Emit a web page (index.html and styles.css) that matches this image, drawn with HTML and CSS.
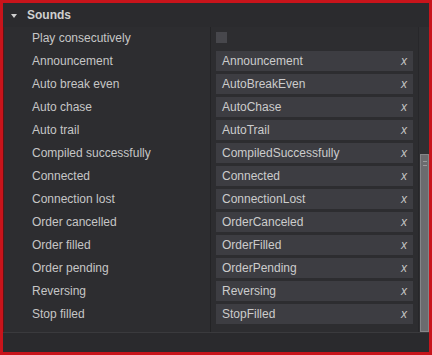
FILE: index.html
```html
<!DOCTYPE html>
<html>
<head>
<meta charset="utf-8">
<link rel="stylesheet" href="styles.css">
</head>
<body>
<div class="frame">
  <div class="header"><span class="tri"></span><span class="title">Sounds</span></div>
  <div class="scrollarea">
    <div class="rows">
      <div class="row"><div class="label">Play consecutively</div><div class="value"><span class="check"></span></div></div>
      <div class="row"><div class="label">Announcement</div><div class="value"><div class="input"><span>Announcement</span><i>x</i></div></div></div>
      <div class="row"><div class="label">Auto break even</div><div class="value"><div class="input"><span>AutoBreakEven</span><i>x</i></div></div></div>
      <div class="row"><div class="label">Auto chase</div><div class="value"><div class="input"><span>AutoChase</span><i>x</i></div></div></div>
      <div class="row"><div class="label">Auto trail</div><div class="value"><div class="input"><span>AutoTrail</span><i>x</i></div></div></div>
      <div class="row"><div class="label">Compiled successfully</div><div class="value"><div class="input"><span>CompiledSuccessfully</span><i>x</i></div></div></div>
      <div class="row"><div class="label">Connected</div><div class="value"><div class="input"><span>Connected</span><i>x</i></div></div></div>
      <div class="row"><div class="label">Connection lost</div><div class="value"><div class="input"><span>ConnectionLost</span><i>x</i></div></div></div>
      <div class="row"><div class="label">Order cancelled</div><div class="value"><div class="input"><span>OrderCanceled</span><i>x</i></div></div></div>
      <div class="row"><div class="label">Order filled</div><div class="value"><div class="input"><span>OrderFilled</span><i>x</i></div></div></div>
      <div class="row"><div class="label">Order pending</div><div class="value"><div class="input"><span>OrderPending</span><i>x</i></div></div></div>
      <div class="row"><div class="label">Reversing</div><div class="value"><div class="input"><span>Reversing</span><i>x</i></div></div></div>
      <div class="row"><div class="label">Stop filled</div><div class="value"><div class="input"><span>StopFilled</span><i>x</i></div></div></div>
      <div class="filler"><div class="label"></div><div class="value"></div></div>
    </div>
    <div class="scrollbar"><div class="thumb"><span class="grip"></span></div></div>
  </div>
  <div class="footer"></div>
</div>
</body>
</html>
```

FILE: styles.css
```css
html, body {
  margin: 0;
  padding: 0;
  background: #b01015;
}
body {
  width: 432px;
  height: 355px;
  overflow: hidden;
  font-family: "Liberation Sans", Arial, sans-serif;
  font-size: 12px;
  color: #c6c6c6;
}
.frame {
  box-sizing: border-box;
  width: 432px;
  height: 355px;
  border: 3px solid #c8141b;
  background: #2d2d30;
  display: flex;
  flex-direction: column;
  box-shadow: inset 0 0 0 1px #5a1416;
}
.header {
  height: 24px;
  flex: none;
  display: flex;
  align-items: center;
  background: #2b2b2e;
}
.tri {
  width: 0;
  height: 0;
  margin-left: 8px;
  margin-top: 1px;
  border-left: 3.5px solid transparent;
  border-right: 3.5px solid transparent;
  border-top: 4px solid #d0d0d0;
}
.title {
  margin-left: 10px;
  font-weight: bold;
  color: #d0d0d0;
}
.scrollarea {
  display: flex;
  height: 305px;
  flex: none;
}
.rows {
  flex: 1;
  display: flex;
  flex-direction: column;
}
.row {
  height: 23px;
  display: flex;
  flex: none;
}
.label {
  width: 208px;
  box-sizing: border-box;
  padding-left: 29px;
  line-height: 23px;
  border-right: 1px solid #232325;
  white-space: nowrap;
}
.value {
  flex: 1;
  padding: 1px 5px 2px 5px;
  display: flex;
  align-items: flex-start;
}
.check {
  width: 11px;
  height: 11px;
  margin-top: 4px;
  background: #47474c;
}
.input {
  flex: 1;
  height: 20px;
  background: #3d3d42;
  display: flex;
  align-items: center;
  justify-content: space-between;
  padding: 0 6px;
  color: #cccccc;
}
.input i {
  font-style: italic;
  color: #c4c4c4;
  margin-right: 0;
}
.filler {
  flex: 1;
  display: flex;
}
.scrollbar {
  width: 10px;
  flex: none;
  background: #2f2f32;
  border-left: 1px solid #27272a;
  position: relative;
}
.thumb {
  position: absolute;
  left: 1px;
  right: 0;
  top: 127px;
  bottom: 0;
  background: #6b6b6e;
  border: 1px solid #858588;
}
.grip {
  position: absolute;
  left: 2px;
  right: 1px;
  top: 6px;
  height: 3px;
  border-top: 1px solid #9a9a9c;
  border-bottom: 1px solid #9a9a9c;
}
.footer {
  flex: 1;
  border-top: 1px solid #3a3a3d;
  background: #2a2a2d;
}
```
